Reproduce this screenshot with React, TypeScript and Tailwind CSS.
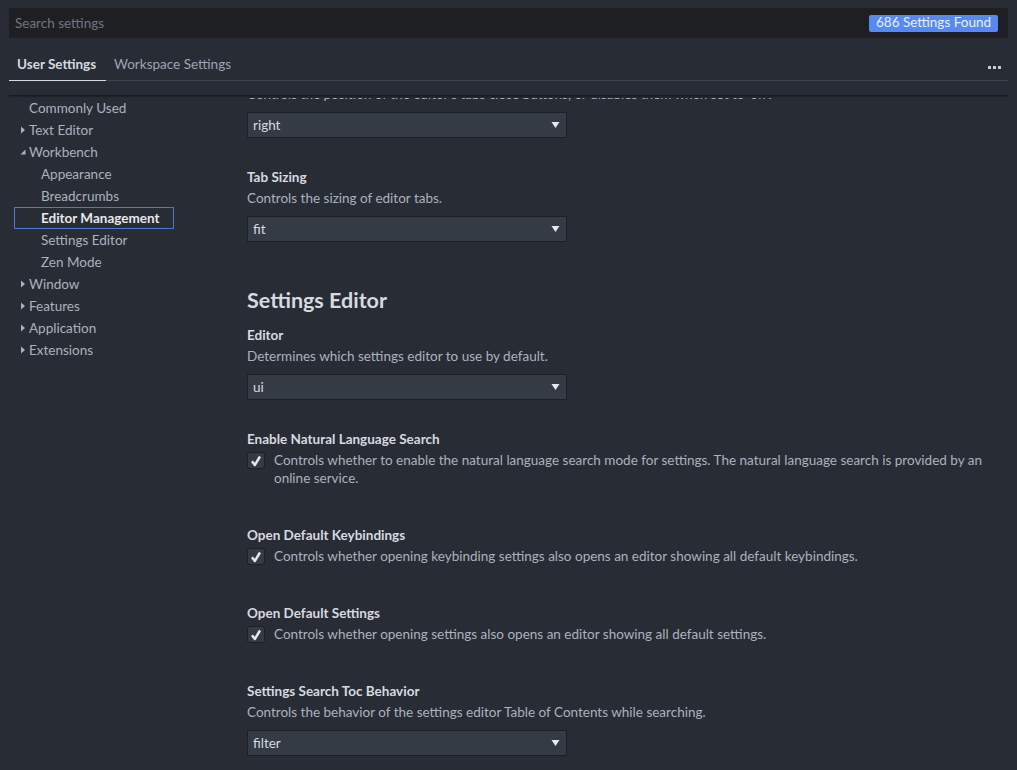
import React from 'react'

const Chevron = ({ open }: { open?: boolean }) =>
  open ? (
    <svg width="10" height="10" viewBox="0 0 10 10" className="shrink-0">
      <path d="M1.5 7.5 L6.5 7.5 L6.5 2.5 Z" fill="#abb2bf" />
    </svg>
  ) : (
    <svg width="10" height="10" viewBox="0 0 10 10" className="shrink-0">
      <path d="M2 1.5 L6 5 L2 8.5 Z" fill="#abb2bf" />
    </svg>
  )

const TocItem = ({
  label,
  level = 0,
  chevron,
  open,
  selected,
}: {
  label: string
  level?: number
  chevron?: boolean
  open?: boolean
  selected?: boolean
}) => (
  <div
    className={`h-[22px] flex items-center ${
      level === 1 ? 'ml-[5px] w-[160px] pl-[27px]' : 'pl-[10px]'
    } ${selected ? 'outline outline-1 -outline-offset-1 outline-[#4d78cc] font-bold text-[#e6e8ec]' : 'text-[#abb2bf]'}`}
  >
    {level === 0 && (
      <span className="w-[10px] flex items-center">
        {chevron && <Chevron open={open} />}
      </span>
    )}
    <span>{label}</span>
  </div>
)

const Dropdown = ({ value }: { value: string }) => (
  <div className="mt-[9px] w-[320px] h-[26px] bg-[#353b45] border border-[#1d1f23] flex items-center justify-between pl-[5px] pr-[6px] text-[#d7dae0]">
    <span>{value}</span>
    <svg width="9" height="8" viewBox="0 0 9 8">
      <path d="M0.5 1 L8.5 1 L4.5 7 Z" fill="#e6e8ec" />
    </svg>
  </div>
)

const Title = ({ children, className = '' }: { children: React.ReactNode; className?: string }) => (
  <div className={`font-bold text-[#d7dae0] ${className}`}>{children}</div>
)

const CheckRow = ({ children }: { children: React.ReactNode }) => (
  <div className="mt-[3px] flex items-start">
    <div className="mt-[1px] w-[18px] h-[17px] shrink-0 rounded-[3px] bg-[#353b45] border border-[#1d1f23] flex items-center justify-center">
      <svg width="14" height="14" viewBox="0 0 14 14">
        <path d="M3 7.2 L5.8 11 L11 2.5" fill="none" stroke="#e6e8ec" strokeWidth="2.4" strokeLinejoin="round" />
      </svg>
    </div>
    <p className="ml-[9px] text-[#abb2bf]">{children}</p>
  </div>
)

export default function App() {
  return (
    <div className="h-[770px] w-full overflow-hidden bg-[#282c34] font-['Lato',sans-serif] text-[13.5px] leading-[18px]">
      <div className="px-[9px] pt-[8px]">
        <div className="h-[30px] bg-[#1d1f23] flex items-center justify-between pl-[6px] pr-[10px]">
          <span className="text-[#6f7682]">Search settings</span>
          <span className="h-[17px] w-[129px] justify-center rounded-[2px] bg-[#568af2] text-[#e8efff] flex items-center leading-none">
            686 Settings Found
          </span>
        </div>
        <div className="flex items-end justify-between border-b border-[#3e4451]">
          <div className="flex items-end">
            <div className="-mb-px w-[97px] pt-[17px] pb-[7px] pl-[8px] border-b border-[#d7dae0] font-bold text-[#d7dae0]">
              User Settings
            </div>
            <div className="pt-[17px] pb-[7px] px-[8px] text-[#9da5b4]">Workspace Settings</div>
          </div>
          <div className="pb-[11px] pr-[7px] flex gap-[2px]">
            <span className="w-[3px] h-[3px] bg-[#c8ccd4]" />
            <span className="w-[3px] h-[3px] bg-[#c8ccd4]" />
            <span className="w-[3px] h-[3px] bg-[#c8ccd4]" />
          </div>
        </div>
      </div>

      <div className="relative mt-[14px] ml-[9px] mr-[9px] flex h-[700px] overflow-hidden">
        <div className="absolute left-0 right-0 top-0 h-[3px] bg-gradient-to-b from-[#16181c] to-[#282c34]" />
        <nav className="w-[238px] shrink-0 pt-[2px]">
          <TocItem label="Commonly Used" />
          <TocItem label="Text Editor" chevron />
          <TocItem label="Workbench" chevron open />
          <TocItem label="Appearance" level={1} />
          <TocItem label="Breadcrumbs" level={1} />
          <TocItem label="Editor Management" level={1} selected />
          <TocItem label="Settings Editor" level={1} />
          <TocItem label="Zen Mode" level={1} />
          <TocItem label="Window" chevron />
          <TocItem label="Features" chevron />
          <TocItem label="Application" chevron />
          <TocItem label="Extensions" chevron />
        </nav>

        <main className="flex-1 pr-[22px]">
          <div className="-mt-[10px]">
            <p className="text-[#abb2bf]">
              Controls the position of the editor's tabs close buttons, or disables them when set to 'off'.
            </p>
            <Dropdown value="right" />

            <Title className="mt-[30px]">Tab Sizing</Title>
            <p className="mt-[3px] text-[#abb2bf]">Controls the sizing of editor tabs.</p>
            <Dropdown value="fit" />

            <h2 className="mt-[44px] text-[21.5px] leading-[28px] font-bold text-[#d7dae0]">Settings Editor</h2>

            <Title className="mt-[12px]">Editor</Title>
            <p className="mt-[3px] text-[#abb2bf]">Determines which settings editor to use by default.</p>
            <Dropdown value="ui" />

            <Title className="mt-[30px]">Enable Natural Language Search</Title>
            <CheckRow>
              Controls whether to enable the natural language search mode for settings. The natural language search is provided by an online service.
            </CheckRow>

            <Title className="mt-[39px]">Open Default Keybindings</Title>
            <CheckRow>
              Controls whether opening keybinding settings also opens an editor showing all default keybindings.
            </CheckRow>

            <Title className="mt-[39px]">Open Default Settings</Title>
            <CheckRow>Controls whether opening settings also opens an editor showing all default settings.</CheckRow>

            <Title className="mt-[39px]">Settings Search Toc Behavior</Title>
            <p className="mt-[3px] text-[#abb2bf]">
              Controls the behavior of the settings editor Table of Contents while searching.
            </p>
            <Dropdown value="filter" />
          </div>
        </main>
      </div>
    </div>
  )
}
